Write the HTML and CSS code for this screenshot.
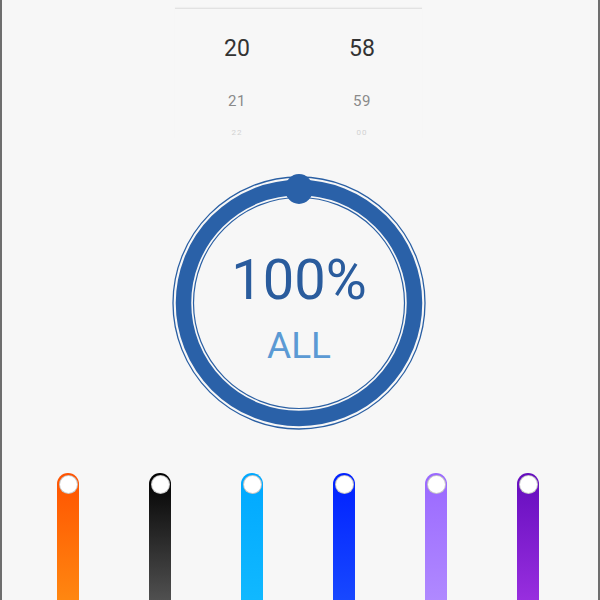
FILE: index.html
```html
<!DOCTYPE html>
<html>
<head>
<meta charset="utf-8">
<link rel="stylesheet" href="styles.css">
</head>
<body>
<div class="screen">
  <div class="picker">
    <div class="picker-col">
      <div class="num sel">20</div>
      <div class="num next">21</div>
      <div class="num far">22</div>
    </div>
    <div class="picker-col">
      <div class="num sel">58</div>
      <div class="num next">59</div>
      <div class="num far">00</div>
    </div>
  </div>

  <div class="dial">
    <svg class="ring" width="260" height="260" viewBox="0 0 260 260">
      <circle cx="130" cy="130" r="126" fill="none" stroke="#2a5fa3" stroke-width="1.3"/>
      <circle cx="130" cy="130" r="115.5" fill="none" stroke="#2a61a8" stroke-width="15.5"/>
      <circle cx="130" cy="130" r="105.5" fill="none" stroke="#2a5fa3" stroke-width="1.2"/>
      <ellipse cx="130" cy="16" rx="14" ry="15" fill="#2a61a8"/>
    </svg>
    <div class="readout">
      <div class="pct">100%</div>
      <div class="all">ALL</div>
    </div>
  </div>

  <div class="sliders">
    <div class="slot"><div class="bar orange"><span class="knob"></span></div></div>
    <div class="slot"><div class="bar black"><span class="knob"></span></div></div>
    <div class="slot"><div class="bar sky"><span class="knob"></span></div></div>
    <div class="slot"><div class="bar blue"><span class="knob"></span></div></div>
    <div class="slot"><div class="bar lavender"><span class="knob"></span></div></div>
    <div class="slot"><div class="bar purple"><span class="knob"></span></div></div>
  </div>
</div>
</body>
</html>
```

FILE: styles.css
```css
html, body {
  margin: 0;
  padding: 0;
  height: 600px;
  overflow: hidden;
  background: #f7f7f7;
  font-family: Roboto, "Noto Sans", sans-serif;
}

.screen {
  box-sizing: border-box;
  height: 600px;
  border-left: 2px solid #6e6e6e;
  border-right: 2px solid #6e6e6e;
  display: flex;
  flex-direction: column;
  overflow: hidden;
}

.picker {
  margin-top: 8px;
  margin-left: 173px;
  width: 247px;
  border-top: 1px solid #e2e2e2;
  box-shadow: 0 -1px 1px rgba(0,0,0,0.03);
  display: flex;
  justify-content: space-between;
  padding: 0 25px 0 27px;
  box-sizing: border-box;
}

.picker-col {
  display: flex;
  flex-direction: column;
  align-items: center;
  width: 70px;
}

.num {
  text-align: center;
}

.sel {
  margin-top: 25px;
  height: 30px;
  line-height: 30px;
  font-size: 23px;
  color: #333333;
}

.next {
  margin-top: 25px;
  height: 24px;
  line-height: 24px;
  font-size: 15px;
  color: #8a8a8a;
  letter-spacing: 0.5px;
}

.far {
  margin-top: 14px;
  height: 12px;
  line-height: 12px;
  font-size: 8px;
  color: #d2d2d2;
  letter-spacing: 1px;
}

.dial {
  margin-top: 34px;
  align-self: center;
  margin-left: -2px;
  width: 260px;
  height: 260px;
  display: grid;
}

.ring, .readout {
  grid-area: 1 / 1;
}

.readout {
  display: flex;
  flex-direction: column;
  align-items: center;
}

.pct {
  margin-top: 77px;
  font-size: 56px;
  line-height: 60px;
  color: #2a5c9d;
}

.all {
  margin-top: 14px;
  font-size: 37px;
  line-height: 44px;
  color: #5b9ad4;
}

.sliders {
  margin-top: 40px;
  padding-left: 20px;
  display: grid;
  grid-template-columns: repeat(6, 92px);
}

.slot {
  display: flex;
  justify-content: center;
}

.bar {
  width: 22px;
  height: 140px;
  border-radius: 11px 11px 0 0;
  display: flex;
  justify-content: center;
  padding-top: 2px;
  box-sizing: border-box;
}

.knob {
  width: 17px;
  height: 17px;
  border-radius: 50%;
  background: #ffffff;
  border: 1px solid rgba(0,0,0,0.22);
}

.orange { background: linear-gradient(#ff5200, #ff8c12); }
.black { background: linear-gradient(#000000, #585858); }
.sky { background: linear-gradient(#00a8ff, #12baff); }
.blue { background: linear-gradient(#0020ff, #1a4cff); }
.lavender { background: linear-gradient(#9a68ff, #b28cff); }
.purple { background: linear-gradient(#640cbd, #9d32e2); }
```
